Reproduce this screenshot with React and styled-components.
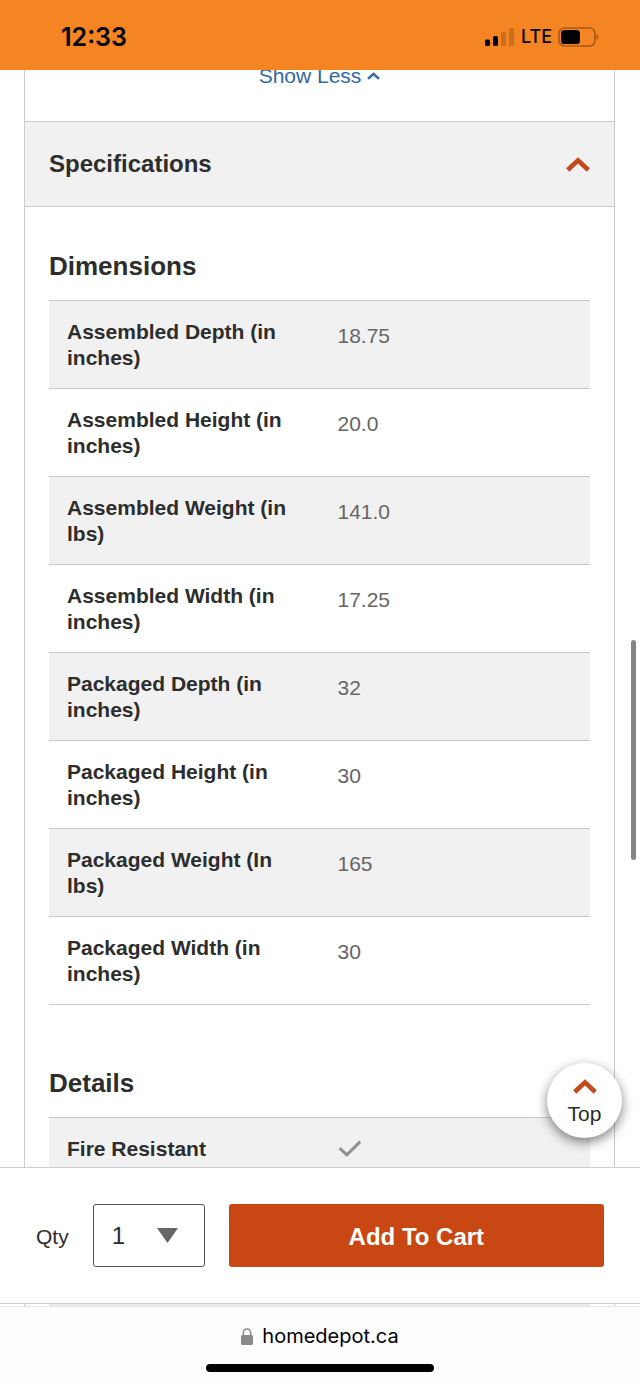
import React, { useState } from "react";
import styled, { createGlobalStyle } from "styled-components";

const dimensions = [
    { name: "Assembled Depth (in inches)", value: "18.75" },
    { name: "Assembled Height (in inches)", value: "20.0" },
    { name: "Assembled Weight (in lbs)", value: "141.0" },
    { name: "Assembled Width (in inches)", value: "17.25" },
    { name: "Packaged Depth (in inches)", value: "32" },
    { name: "Packaged Height (in inches)", value: "30" },
    { name: "Packaged Weight (In lbs)", value: "165" },
    { name: "Packaged Width (in inches)", value: "30" },
];

const details = [{ name: "Fire Resistant", value: true }];

function Chevron({ width, height, color }) {
    return (
        <svg
            width={width}
            height={height}
            viewBox='0 0 24 15'
            fill='none'
            stroke={color}
            strokeWidth='4.6'
            aria-hidden='true'
        >
            <path d='M1.7 13 12 3.4 22.3 13' />
        </svg>
    );
}

function Check() {
    return (
        <svg
            width='24'
            height='18'
            viewBox='0 0 24 18'
            fill='none'
            stroke='#919191'
            strokeWidth='3'
            strokeLinejoin='round'
            role='img'
            aria-label='Yes'
        >
            <path d='M1.6 8.2 8.800 14.900 22.2 1.6' />
        </svg>
    );
}

function StatusIcons() {
    return (
        <StatusRight>
            <svg width='30' height='18' viewBox='0 0 30 18' aria-hidden='true'>
                <rect x='0' y='11.5' width='5' height='6.5' rx='1.6' />
                <rect x='8' y='8' width='5' height='10' rx='1.6' />
                <g fill='#c96f1e'>
                    <rect x='16' y='4' width='5' height='14' rx='1.6' />
                    <rect x='24' y='0' width='5' height='18' rx='1.6' />
                </g>
            </svg>
            <Network>LTE</Network>
            <svg width='42' height='20' viewBox='0 0 42 20' aria-hidden='true'>
                <rect
                    x='1'
                    y='1'
                    width='36'
                    height='18'
                    rx='5.5'
                    fill='none'
                    stroke='#a65a18'
                    strokeWidth='1.6'
                />
                <rect x='3' y='3' width='19' height='14' rx='3.6' />
                <path d='M38.6 7c2.2.8 2.2 5.2 0 6z' fill='#a65a18' />
            </svg>
        </StatusRight>
    );
}

function SpecTable({ title, rows }) {
    return (
        <Section>
            <SectionTitle>{title}</SectionTitle>
            <Table aria-label={title}>
                <tbody>
                    {rows.map((row) => (
                        <Row key={row.name}>
                            <Name scope='row'>{row.name}</Name>
                            <Value>
                                {row.value === true ? <Check /> : row.value}
                            </Value>
                        </Row>
                    ))}
                </tbody>
            </Table>
        </Section>
    );
}

export default function App() {
    const [open, setOpen] = useState(true);
    const [qty, setQty] = useState("1");

    return (
        <Shell>
            <GlobalStyle />
            <StatusBar>
                <Time>12:33</Time>
                <StatusIcons />
            </StatusBar>

            <Viewport>
                <Card>
                    <ShowLess type='button'>
                        Show Less
                        <Chevron width={13} height={8} color='#3069a6' />
                    </ShowLess>
                    <AccordionHeading>
                        <AccordionButton
                            type='button'
                            aria-expanded={open}
                            onClick={() => setOpen(!open)}
                        >
                            Specifications
                            <Chevron width={24} height={15} color='#c44a1c' />
                        </AccordionButton>
                    </AccordionHeading>
                    {open && (
                        <Panel>
                            <SpecTable title='Dimensions' rows={dimensions} />
                            <SpecTable title='Details' rows={details} />
                        </Panel>
                    )}
                </Card>
                <ScrollThumb />
                <TopButton type='button'>
                    <Chevron width={24} height={15} color='#c44a1c' />
                    Top
                </TopButton>
            </Viewport>

            <CartBar>
                <QtyLabel htmlFor='qty'>Qty</QtyLabel>
                <SelectWrap>
                    <Select
                        id='qty'
                        value={qty}
                        onChange={(e) => setQty(e.target.value)}
                    >
                        {["1", "2", "3", "4", "5"].map((n) => (
                            <option key={n}>{n}</option>
                        ))}
                    </Select>
                    <svg
                        width='21'
                        height='15'
                        viewBox='0 0 21 15'
                        aria-hidden='true'
                    >
                        <path d='M0 0h21L10.5 15z' fill='#666' />
                    </svg>
                </SelectWrap>
                <AddToCart type='button'>Add To Cart</AddToCart>
            </CartBar>
            <PageEdge>
                <div />
            </PageEdge>

            <BrowserBar>
                <Address>
                    <svg
                        width='12'
                        height='17'
                        viewBox='0 0 12 17'
                        aria-hidden='true'
                    >
                        <rect
                            y='7'
                            width='12'
                            height='10'
                            rx='1.6'
                            fill='#8a8a8a'
                        />
                        <path
                            d='M2.3 8V4.800a3.7 3.9 0 0 1 7.4 0V8'
                            fill='none'
                            stroke='#8a8a8a'
                            strokeWidth='1.5'
                        />
                    </svg>
                    homedepot.ca
                </Address>
                <HomeIndicator />
            </BrowserBar>
        </Shell>
    );
}

const GlobalStyle = createGlobalStyle`
    * {
        box-sizing: border-box;
    }

    body {
        margin: 0;
        background: #fff;
        color: #2d2d2d;
        font-family: "Liberation Sans", Arial, sans-serif;
        font-size: 21px;
    }

    button,
    select {
        margin: 0;
        font: inherit;
        cursor: pointer;
    }
`;

const Shell = styled.div`
    display: flex;
    flex-direction: column;
    height: 100vh;
`;

const StatusBar = styled.header`
    display: flex;
    flex: none;
    align-items: center;
    justify-content: space-between;
    height: 70px;
    padding: 4px 40px 0 61px;
    background: #f58423;
    color: #000;
    font-family: Inter, sans-serif;
`;

const Time = styled.span`
    font-size: 25px;
    font-weight: 600;
`;

const StatusRight = styled.div`
    display: flex;
    align-items: center;
    gap: 6px;
`;

const Network = styled.span`
    font-size: 18px;
    font-weight: 500;
    line-height: 20px;
`;

const Viewport = styled.main`
    position: relative;
    flex: 1;
    min-height: 0;
    overflow: hidden;
`;

const Card = styled.section`
    min-height: 100%;
    margin: 0 25px 0 24px;
    border: solid #ccc;
    border-width: 0 1px;
`;

const ShowLess = styled.button`
    display: flex;
    align-items: center;
    gap: 6px;
    height: 24px;
    margin: -6px auto 33px;
    padding: 0;
    border: 0;
    background: none;
    color: #3069a6;
    line-height: 24px;
`;

const AccordionHeading = styled.h2`
    margin: 0;
    font-size: 24px;
`;

const AccordionButton = styled.button`
    display: flex;
    align-items: center;
    justify-content: space-between;
    width: 100%;
    height: 86px;
    padding: 0 24px;
    border: solid #ccc;
    border-width: 1px 0;
    background: #f1f1f1;
    color: #2d2d2d;
`;

const Panel = styled.div`
    padding: 43px 24px 0;
`;

const Section = styled.section`
    margin-bottom: 62px;
`;

const SectionTitle = styled.h3`
    margin: 0 0 18px;
    font-size: 26px;
    line-height: 32px;
`;

const Table = styled.table`
    width: 100%;
    border-top: 1px solid #c8c8c8;
    border-spacing: 0;
    table-layout: fixed;
`;

const Row = styled.tr`
    &:nth-child(odd) {
        background: #f1f1f1;
    }
`;

const Name = styled.th`
    width: 50%;
    padding: 18px 18px 17px;
    border-bottom: 1px solid #c8c8c8;
    line-height: 26px;
    text-align: left;
    vertical-align: top;
`;

const Value = styled.td`
    padding: 22px 18px 13px;
    border-bottom: 1px solid #c8c8c8;
    color: #666;
    line-height: 26px;
    vertical-align: top;

    svg {
        display: block;
    }
`;

const ScrollThumb = styled.div`
    position: absolute;
    top: 52%;
    right: 4px;
    width: 5px;
    height: 20%;
    border-radius: 3px;
    background: #848484;
`;

const TopButton = styled.button`
    position: absolute;
    right: 18px;
    bottom: 29px;
    display: flex;
    flex-direction: column;
    align-items: center;
    gap: 8px;
    width: 75px;
    height: 75px;
    padding: 16px 0 0;
    border: 0;
    border-radius: 50%;
    background: #fff;
    box-shadow: 0 4px 12px rgba(0, 0, 0, 0.5);
    color: #2d2d2d;
    line-height: 24px;
`;

const CartBar = styled.div`
    display: flex;
    flex: none;
    align-items: center;
    gap: 24px;
    padding: 36px;
    border: solid #ccc;
    border-width: 1px 0;
`;

const QtyLabel = styled.label`
    padding-top: 2px;
    line-height: 24px;
`;

const SelectWrap = styled.div`
    position: relative;
    width: 112px;

    svg {
        position: absolute;
        top: 24px;
        right: 27px;
        pointer-events: none;
    }
`;

const Select = styled.select`
    display: block;
    width: 100%;
    height: 63px;
    padding: 0 18px;
    border: 1px solid #555;
    border-radius: 3px;
    appearance: none;
    background: #fff;
    color: #2d2d2d;
    font-size: 24px;
`;

const AddToCart = styled.button`
    flex: 1;
    height: 63px;
    padding: 2px 0 0;
    border: 0;
    border-radius: 3px;
    background: #c94713;
    color: #fff;
    font-size: 24px;
    font-weight: bold;
`;

/* sliver of the page that shows between the cart bar and the browser bar */
const PageEdge = styled.div`
    flex: none;
    margin: 0 25px 0 24px;
    padding: 0 24px;
    border: solid #ccc;
    border-width: 0 1px;

    div {
        height: 2px;
        background: #eaeaea;
    }
`;

const BrowserBar = styled.footer`
    display: flex;
    flex: none;
    flex-direction: column;
    align-items: center;
    justify-content: space-between;
    height: 78px;
    padding: 16px 0 12px;
    border-top: 1px solid #e4e4e4;
    background: #fdfdfd;
`;

const Address = styled.div`
    display: flex;
    align-items: center;
    gap: 9px;
    color: #000;
    font-family: Inter, sans-serif;
    font-size: 20px;
    line-height: 26px;
`;

const HomeIndicator = styled.div`
    width: 228px;
    height: 8px;
    border-radius: 4px;
    background: #000;
`;
